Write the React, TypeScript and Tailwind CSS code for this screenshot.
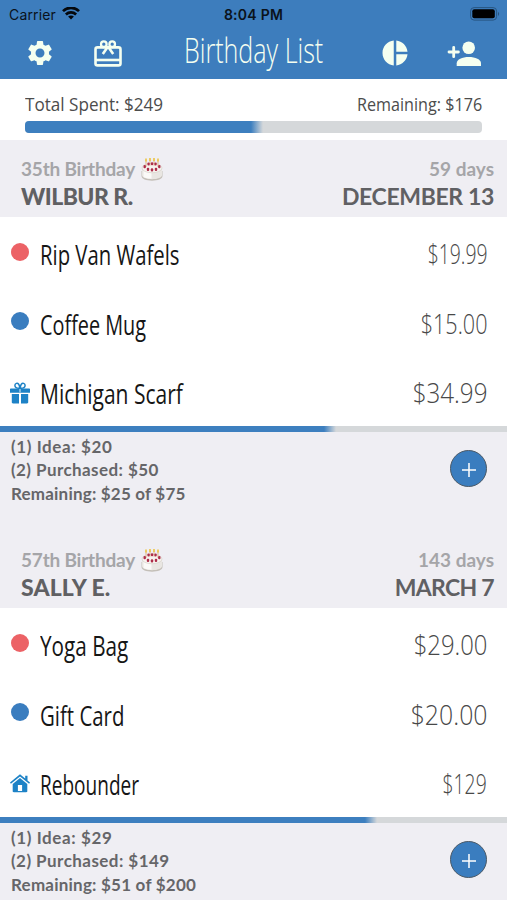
import clsx from 'clsx'
import { MdPieChart, MdSettings } from 'react-icons/md'

type Status = 'idea' | 'purchased' | 'wrapped' | 'delivered'

interface Gift {
  name: string
  price: string
  status: Status
  /** Horizontal squeeze of the name and the price */
  nameScale: string
  priceScale: string
}

interface Person {
  birthday: string
  name: string
  days: string
  date: string
  nameSpacing: string
  dateSpacing: string
  gifts: Gift[]
  progress: number
  summary: Array<{ text: string; spacing: string }>
}

const PEOPLE: Person[] = [
  {
    birthday: '35th Birthday',
    name: 'WILBUR R.',
    days: '59 days',
    date: 'DECEMBER 13',
    nameSpacing: 'tracking-[-0.55px]',
    dateSpacing: 'tracking-[-0.35px]',
    gifts: [
      { name: 'Rip Van Wafels', price: '$19.99', status: 'idea', nameScale: 'scale-x-[0.752]', priceScale: 'scale-x-[0.717]' },
      { name: 'Coffee Mug', price: '$15.00', status: 'purchased', nameScale: 'scale-x-[0.735]', priceScale: 'scale-x-[0.8]' },
      { name: 'Michigan Scarf', price: '$34.99', status: 'wrapped', nameScale: 'scale-x-[0.779]', priceScale: 'scale-x-[0.896]' },
    ],
    progress: 66.3,
    summary: [
      { text: '(1) Idea: $20', spacing: 'tracking-[0.6px]' },
      { text: '(2) Purchased: $50', spacing: 'tracking-[0.42px]' },
      { text: 'Remaining: $25 of $75', spacing: 'tracking-[0.2px]' },
    ],
  },
  {
    birthday: '57th Birthday',
    name: 'SALLY E.',
    days: '143 days',
    date: 'MARCH 7',
    nameSpacing: 'tracking-[0.1px]',
    dateSpacing: 'tracking-[-0.7px]',
    gifts: [
      { name: 'Yoga Bag', price: '$29.00', status: 'idea', nameScale: 'scale-x-[0.767]', priceScale: 'scale-x-[0.884]' },
      { name: 'Gift Card', price: '$20.00', status: 'purchased', nameScale: 'scale-x-[0.755]', priceScale: 'scale-x-[0.92]' },
      { name: 'Rebounder', price: '$129', status: 'delivered', nameScale: 'scale-x-[0.705]', priceScale: 'scale-x-[0.715]' },
    ],
    progress: 74.3,
    summary: [
      { text: '(1) Idea: $29', spacing: 'tracking-[0.6px]' },
      { text: '(2) Purchased: $149', spacing: 'tracking-[0.45px]' },
      { text: 'Remaining: $51 of $200', spacing: 'tracking-[0.22px]' },
    ],
  },
]

function WifiIcon() {
  return (
    <svg width="18" height="14" viewBox="0 0 18 14" fill="none" stroke="#05080c" strokeWidth="2.7">
      <path d="M1 4.1C5.5-.3 12.5-.3 17 4.1" />
      <path d="M3.9 7.4C6.8 4.7 11.2 4.7 14.1 7.4" />
      <path d="M6.1 9.6C7.7 8.2 10.3 8.2 11.9 9.6L9 12.5z" fill="#05080c" stroke="none" />
    </svg>
  )
}

function BatteryIcon() {
  return (
    <svg width="30" height="14" viewBox="0 0 30 14">
      <rect x=".6" y=".6" width="26" height="12.5" rx="3.5" fill="none" stroke="#285580" />
      <rect x="2.3" y="2.3" width="22.5" height="9" rx="2" fill="#000" />
      <path d="M28 4.8c1.5.8 1.5 3.4 0 4.2z" fill="#285580" />
    </svg>
  )
}

function GiftCardIcon() {
  return (
    <svg width="28" height="27" viewBox="0 0 28 27" fill="none" stroke="currentColor" strokeWidth="2.6">
      <rect x="1.5" y="7.4" width="25" height="18" rx="2" />
      <circle cx="9.8" cy="4.2" r="2.8" strokeWidth="2.3" />
      <circle cx="18.2" cy="4.2" r="2.8" strokeWidth="2.3" />
      <path d="M14 6.5 8.8 14M14 6.5l5.2 7.5" />
      <path d="M1.5 20h25" />
    </svg>
  )
}

function AddPersonIcon() {
  return (
    <svg width="35" height="27" viewBox="0 0 35 27" fill="currentColor">
      <circle cx="21.7" cy="7.8" r="6.3" />
      <path d="M9.7 26v-2.8c0-3.7 5.5-6.2 12.1-6.2S34 19.5 34 23.2V26z" />
      <path d="M6.7 7.3v9.4M2 12h9.4" fill="none" stroke="currentColor" strokeWidth="2.8" strokeLinecap="round" />
    </svg>
  )
}

function CakeIcon() {
  return (
    <svg width="22" height="23" viewBox="0 0 22 23">
      <path d="M.5 13v5c0 2.9 4.7 4.7 10.5 4.7s10.500-1.800 10.500-4.700v-5z" fill="#c4bfb8" />
      <path d="M1 10.5v6.8c0 2.4 4.5 3.9 10 3.9s10-1.5 10-3.9v-6.8z" fill="#e9e6e2" />
      <path d="M2.5 12v7c2 1.2 5 1.7 8 1.7V12z" fill="#fbfaf8" />
      <ellipse cx="11" cy="10" rx="10" ry="4.8" fill="#f7f3ef" stroke="#d2ccc5" strokeWidth=".6" />
      <path d="M5 2v7M9 1.5v6M13 1.5v6M17 2v7" stroke="#e5c7ae" strokeWidth="1.5" />
      <path d="M5 .5v3M9 0v3M13 0v3M17 .5v3" stroke="#ecc64e" strokeWidth="1.7" />
      <g fill="#ae2d49">
        <rect x="2.5" y="7" width="2.4" height="3.2" rx="1" />
        <rect x="6.4" y="4.6" width="2.3" height="3" rx="1" />
        <rect x="9.9" y="4.2" width="2.3" height="3" rx="1" />
        <rect x="13.4" y="4.6" width="2.3" height="3" rx="1" />
        <rect x="17.1" y="7" width="2.4" height="3.2" rx="1" />
        <rect x="5.8" y="9.7" width="2.4" height="3.2" rx="1" />
        <rect x="9.8" y="10.3" width="2.4" height="3.2" rx="1" />
        <rect x="13.800" y="9.7" width="2.4" height="3.2" rx="1" />
      </g>
    </svg>
  )
}

function PresentIcon() {
  return (
    <svg width="20" height="22" viewBox="0 0 20 22" fill="#1d82c6">
      <path d="M.7 6.4h18.6c.5 0 .7.3.7.8v3.6H0V7.2c0-.5.2-.8.7-.8z" />
      <path d="M1.8 12H9v9.500H3c-.8 0-1.200-.5-1.200-1.200zM11 12h7.200v8.300c0 .7-.4 1.200-1.200 1.200h-6z" />
      <path d="M9 6.4h2v4.4H9z" fill="#7fb8df" />
      <g fill="none" stroke="#1d82c6" strokeWidth="1.5">
        <path d="M9.7 6.3C6.5 6.6 4.8 5.3 4.9 3.3 5 1.3 7.4.5 8.7 2.2c.8 1 1 2.5 1 4.1z" />
        <path d="M10.3 6.3c3.2.3 4.9-1 4.8-3-.1-2-2.5-2.8-3.8-1.1-.8 1-1 2.500-1 4.100z" />
      </g>
    </svg>
  )
}

function HouseIcon() {
  return (
    <svg width="20" height="19" viewBox="0 0 20 19" fill="#1d82c6">
      <path d="M10 .3 0 8.6l.9 1.2L10 2.500l9.100 7.300.9-1.200-2.500-2.100V1.700h-2.300v2.900z" />
      <path d="M10 4 2.700 9.900V17c0 .8.300 1.200 1.100 1.200h12.400c.8 0 1.100-.4 1.100-1.200V9.900z" />
      <path d="M7.900 11h4.200v6H7.900z" fill="#fff" />
    </svg>
  )
}

function StatusIcon({ status }: { status: Status }) {
  if (status === 'wrapped') return <PresentIcon />
  if (status === 'delivered') return <HouseIcon />
  return <span className={clsx('size-[18px] rounded-full', status === 'idea' ? 'bg-[#ec6266]' : 'bg-[#3a7dbf]')} />
}

/** Bar whose filled part fades into the track */
function Progress({ value, className }: { value: number; className: string }) {
  return (
    <div className={clsx('overflow-hidden bg-[#d5d8da]', className)}>
      <div
        className="h-full bg-[linear-gradient(to_right,#3d7fbf_calc(100%-12px),#d5d8da)]"
        style={{ width: `${value}%` }}
      />
    </div>
  )
}

function GiftRow({ gift }: { gift: Gift }) {
  return (
    <li className="flex h-[69.5px] items-center pr-5 pl-[9px]">
      <span className={clsx('flex w-[21px] justify-center', (gift.status === 'wrapped' || gift.status === 'delivered') && 'pt-1')}>
        <StatusIcon status={gift.status} />
      </span>
      <span className={clsx('ml-[10px] origin-left pt-[7px] text-[27px] whitespace-nowrap text-[#161616]', gift.nameScale)}>
        {gift.name}
      </span>
      <span className={clsx('ml-auto origin-right pt-[5px] text-[27px] font-light whitespace-nowrap text-[#484848]', gift.priceScale)}>
        {gift.price}
      </span>
    </li>
  )
}

function PersonSection({ person }: { person: Person }) {
  return (
    <section className="h-[391px]">
      <div className="flex h-[77px] justify-between bg-[#efeef3] pt-[15px] pr-[13px] pl-[21px] font-['Lato',sans-serif]">
        <div>
          <div className="flex h-[27px] items-center gap-1.5 pt-0.5 text-[19px] font-bold tracking-[-0.2px] text-[#a5a5a8]">
            {person.birthday}
            <CakeIcon />
          </div>
          <div className={clsx('h-7 text-[23px] leading-7 font-black text-[#606063]', person.nameSpacing)}>{person.name}</div>
        </div>
        <div className="text-right">
          <div className="h-[27px] text-[19px] leading-[27px] font-bold text-[#a5a5a8]">{person.days}</div>
          <div className={clsx('h-7 text-[23px] leading-7 font-bold text-[#606063]', person.dateSpacing)}>{person.date}</div>
        </div>
      </div>
      <ul className="h-[209px] bg-white">
        {person.gifts.map((gift) => (
          <GiftRow key={gift.name} gift={gift} />
        ))}
      </ul>
      <Progress value={person.progress} className="h-1.5" />
      <div className="flex h-[99px] justify-between bg-[#efeef3] pt-[3px] pr-5 pl-[11px] font-['Lato',sans-serif]">
        <div className="text-[17px] leading-[23.3px] font-bold text-[#666669]">
          {person.summary.map((line) => (
            <p key={line.text} className={line.spacing}>
              {line.text}
            </p>
          ))}
        </div>
        <button
          type="button"
          aria-label="Add gift"
          className="mt-[15px] flex size-[37px] items-center justify-center rounded-full border border-[#4b5966] bg-[#3a7dbf]"
        >
          <svg width="16" height="16" viewBox="0 0 16 16" className="mt-[3px]" stroke="#fff" strokeWidth="1.5">
            <path d="M1 8h14M8 1v14" />
          </svg>
        </button>
      </div>
    </section>
  )
}

export default function App() {
  return (
    <div className="h-[900px] w-[507px] overflow-hidden bg-[#efeef3] font-['Open_Sans',sans-serif]">
      <header className="h-[79px] bg-[#3d7dbd]">
        <div className="grid h-7 grid-cols-3 items-center px-[9px] font-['Inter',sans-serif] text-[14px] text-[#0a121b]">
          <span className="flex items-center gap-1.5 tracking-[0.15px]">
            Carrier <WifiIcon />
          </span>
          <span className="text-center font-semibold tracking-[0.25px]">8:04 PM</span>
          <span className="-mr-0.5 flex justify-end">
            <BatteryIcon />
          </span>
        </div>
        <div className="grid h-[47px] grid-cols-[184px_140px_1fr] items-center text-[#f5fff0]">
          <div className="flex items-center gap-[39px] pl-[25px]">
            <MdSettings size={30} />
            <GiftCardIcon />
          </div>
          <h1 className="origin-left scale-x-[0.738] pb-1.5 text-[34px] leading-[44px] font-light whitespace-nowrap">Birthday List</h1>
          <div className="flex items-center gap-[37px] pl-[56px]">
            <MdPieChart size={30} />
            <AddPersonIcon />
          </div>
        </div>
      </header>
      <div className="h-[61px] bg-white px-[25px] pt-3">
        <div className="flex h-[30px] justify-between text-[19px] leading-[26px] text-[#4c4c4c]">
          <span className="origin-left scale-x-[0.9] whitespace-nowrap">Total Spent: $249</span>
          <span className="origin-right scale-x-[0.85] whitespace-nowrap">Remaining: $176</span>
        </div>
        <Progress value={52} className="h-3 rounded" />
      </div>
      {PEOPLE.map((person) => (
        <PersonSection key={person.name} person={person} />
      ))}
    </div>
  )
}
